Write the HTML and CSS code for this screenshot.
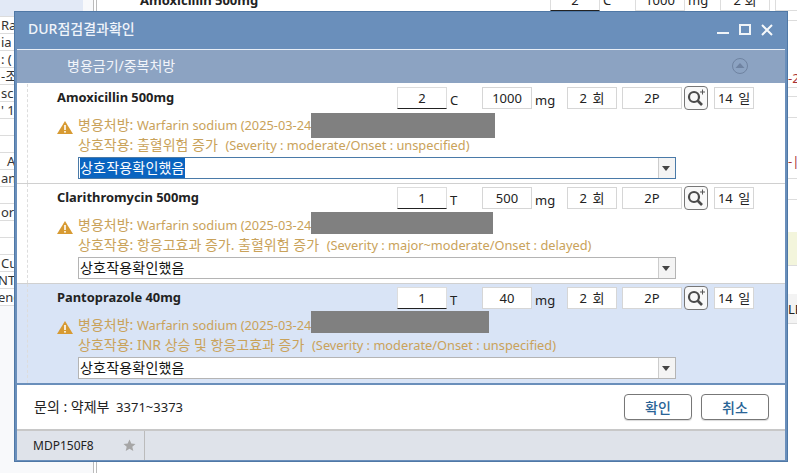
FILE: index.html
```html
<!DOCTYPE html>
<html lang="ko">
<head>
  <meta charset="UTF-8" />
  <title>DUR점검결과확인</title>
  <link rel="stylesheet" href="styles.css">
</head>
<body>

<!-- Window behind the dialog -->
<div class="desktop">
  <div class="back-left">
    <div class="back-cell tall"></div>
    <div class="back-cell">Ra</div>
    <div class="back-cell">ia</div>
    <div class="back-cell">: (</div>
    <div class="back-cell">-조</div>
    <div class="back-cell">sc</div>
    <div class="back-cell">' 1</div>
    <div class="back-cell"></div>
    <div class="back-cell"></div>
    <div class="back-cell right">A</div>
    <div class="back-cell">an</div>
    <div class="back-cell"></div>
    <div class="back-cell">or</div>
    <div class="back-cell"></div>
    <div class="back-cell"></div>
    <div class="back-cell">Cu</div>
    <div class="back-cell clip">NT</div>
    <div class="back-cell clip">eno</div>
  </div>
  <div class="back-top">
    <span class="back-name">Amoxicillin 500mg</span>
    <span class="back-field f-qty">2</span><span class="back-unit">C</span>
    <span class="back-field f-dose">1000</span><span class="back-unit">mg</span>
    <span class="back-field f-times">2 회</span>
    <span class="back-field f-packs"></span>
  </div>
  <div class="back-right">
    <div class="back-line h1"></div>
    <div class="back-line h2 red">-2</div>
    <div class="back-line h3"></div>
    <div class="back-line h4"></div>
    <div class="back-line h5 red">-|</div>
    <div class="back-line h6"></div>
    <div class="back-line h7 yellow"></div>
    <div class="back-line h8">LE</div>
  </div>
</div>

<div class="dialog">
  <div class="titlebar">
    <span class="title">DUR점검결과확인</span>
    <div class="win-btns">
      <svg width="14" height="14" viewBox="0 0 14 14"><rect x="1" y="9" width="12" height="2" fill="#fff" opacity="0.9"/></svg>
      <svg width="14" height="14" viewBox="0 0 14 14"><rect x="2" y="2" width="10" height="9" fill="none" stroke="#fff" stroke-width="2" opacity="0.9"/></svg>
      <svg width="14" height="14" viewBox="0 0 14 14"><path d="M2 2l10 10M12 2L2 12" stroke="#fff" stroke-width="2" opacity="0.95"/></svg>
    </div>
  </div>

  <div class="section">
    <span class="section-title">병용금기/중복처방</span>
    <svg class="collapse" width="18" height="18" viewBox="0 0 18 18"><circle cx="9" cy="9" r="7.500" fill="none" stroke="#6f83a1" stroke-width="1"/><path d="M4.500 11l4.500-5 4.500 5z" fill="#6f83a1"/></svg>
  </div>

  <div class="rows">
    <div class="row">
      <div class="row-top">
        <span class="drug">Amoxicillin 500mg</span>
        <span class="field qty">2</span><span class="unit">C</span>
        <span class="field dose">1000</span><span class="unit">mg</span>
        <span class="field times">2 회</span>
        <span class="field packs">2P</span>
        <button class="zoom-btn"><svg width="22" height="22" viewBox="0 0 22 22"><circle cx="9" cy="10" r="5" fill="none" stroke="#4a4a4a" stroke-width="2.200"/><path d="M12.500 13.500l4.500 4.500" stroke="#4a4a4a" stroke-width="2.600"/><path d="M17.500 2.500v5M15 5h5" stroke="#555" stroke-width="1"/></svg></button>
        <span class="field days">14 일</span>
      </div>
      <div class="warn">
        <svg class="warn-icon" width="16" height="13" viewBox="0 0 16 13"><path d="M8 0L16 13H0z" fill="#d79a32"/><rect x="7.200" y="4" width="1.600" height="5" fill="#fff"/><rect x="7.200" y="10" width="1.600" height="1.600" fill="#fff"/></svg>
        <span>병용처방: <span class="en">Warfarin sodium (2025-03-24</span></span><span class="redact w1"></span>
      </div>
      <div class="effect">상호작용: 출혈위험 증가 <small>(Severity : moderate/Onset : unspecified)</small></div>
      <div class="combo active">
        <span class="combo-text"><span class="selected">상호작용확인했음</span></span>
        <span class="combo-arrow"></span>
      </div>
    </div>

    <div class="row">
      <div class="row-top">
        <span class="drug">Clarithromycin 500mg</span>
        <span class="field qty">1</span><span class="unit">T</span>
        <span class="field dose">500</span><span class="unit">mg</span>
        <span class="field times">2 회</span>
        <span class="field packs">2P</span>
        <button class="zoom-btn"><svg width="22" height="22" viewBox="0 0 22 22"><circle cx="9" cy="10" r="5" fill="none" stroke="#4a4a4a" stroke-width="2.200"/><path d="M12.500 13.500l4.500 4.500" stroke="#4a4a4a" stroke-width="2.600"/><path d="M17.500 2.500v5M15 5h5" stroke="#555" stroke-width="1"/></svg></button>
        <span class="field days">14 일</span>
      </div>
      <div class="warn">
        <svg class="warn-icon" width="16" height="13" viewBox="0 0 16 13"><path d="M8 0L16 13H0z" fill="#d79a32"/><rect x="7.200" y="4" width="1.600" height="5" fill="#fff"/><rect x="7.200" y="10" width="1.600" height="1.600" fill="#fff"/></svg>
        <span>병용처방: <span class="en">Warfarin sodium (2025-03-24</span></span><span class="redact w2"></span>
      </div>
      <div class="effect">상호작용: 항응고효과 증가. 출혈위험 증가 <small>(Severity : major~moderate/Onset : delayed)</small></div>
      <div class="combo">
        <span class="combo-text">상호작용확인했음</span>
        <span class="combo-arrow"></span>
      </div>
    </div>

    <div class="row current">
      <div class="row-top">
        <span class="drug">Pantoprazole 40mg</span>
        <span class="field qty">1</span><span class="unit">T</span>
        <span class="field dose">40</span><span class="unit">mg</span>
        <span class="field times">2 회</span>
        <span class="field packs">2P</span>
        <button class="zoom-btn"><svg width="22" height="22" viewBox="0 0 22 22"><circle cx="9" cy="10" r="5" fill="none" stroke="#4a4a4a" stroke-width="2.200"/><path d="M12.500 13.500l4.500 4.500" stroke="#4a4a4a" stroke-width="2.600"/><path d="M17.500 2.500v5M15 5h5" stroke="#555" stroke-width="1"/></svg></button>
        <span class="field days">14 일</span>
      </div>
      <div class="warn">
        <svg class="warn-icon" width="16" height="13" viewBox="0 0 16 13"><path d="M8 0L16 13H0z" fill="#d79a32"/><rect x="7.200" y="4" width="1.600" height="5" fill="#fff"/><rect x="7.200" y="10" width="1.600" height="1.600" fill="#fff"/></svg>
        <span>병용처방: <span class="en">Warfarin sodium (2025-03-24</span></span><span class="redact w3"></span>
      </div>
      <div class="effect">상호작용: INR 상승 및 항응고효과 증가 <small>(Severity : moderate/Onset : unspecified)</small></div>
      <div class="combo">
        <span class="combo-text">상호작용확인했음</span>
        <span class="combo-arrow"></span>
      </div>
    </div>
  </div>

  <div class="footer">
    <span class="contact">문의 : 약제부 <small>3371~3373</small></span>
    <div class="footer-btns">
      <button class="action">확인</button>
      <button class="action">취소</button>
    </div>
  </div>

  <div class="tabbar">
    <div class="tab">
      <span>MDP150F8</span>
      <svg width="13" height="13" viewBox="0 0 13 13"><path d="M6.500 0.500l1.800 4 4.200 0.400-3.200 2.800 1 4.300-3.800-2.300-3.800 2.300 1-4.300L0.500 4.900l4.200-0.400z" fill="#a6a6a6"/></svg>
    </div>
  </div>
</div>

</body>
</html>
```

FILE: styles.css
```css
* {
  box-sizing: border-box;
}
html, body {
  margin: 0;
  height: 100%;
  overflow: hidden;
}
body {
  position: relative;
  width: 797px;
  height: 473px;
  background: #fff;
  font-family: "Noto Sans", "Noto Sans CJK KR", sans-serif;
  font-size: 13px;
  color: #222;
}

/* Window behind the dialog */
.desktop {
  position: absolute;
  inset: 0;
}
.back-left {
  position: absolute;
  left: 0;
  top: 0;
  width: 94px;
  height: 100%;
  background: #f8f9fb;
  border-right: 1px solid #bbb;
  font-size: 13px;
  color: #333;
}
.back-left::after {
  content: "";
  position: absolute;
  left: 96px;
  top: 0;
  bottom: 0;
  border-left: 1px solid #bbb;
}
.back-cell {
  height: 17px;
  padding-left: 1px;
  border-bottom: 1px solid #dcdcdc;
  background: #fff;
  line-height: 16px;
  white-space: nowrap;
}
.back-cell.tall {
  margin-right: 10px;
  background: #e2e9f6;
}
.back-cell.right {
  padding-left: 7px;
}
.back-cell.clip {
  text-indent: -3px;
}
.back-top {
  position: absolute;
  left: 140px;
  top: -11px;
  display: flex;
  align-items: center;
  width: 657px;
  height: 22px;
}
.back-name {
  width: 410px;
  font-weight: 700;
  flex: none;
}
.back-field {
  height: 22px;
  border: 1px solid #ddd;
  text-align: center;
  line-height: 20px;
  flex: none;
}
.f-qty {
  width: 50px;
  border-bottom-color: #222;
}
.f-dose, .f-times {
  width: 50px;
}
.f-packs {
  width: 60px;
  margin-left: 5px;
}
.back-unit {
  width: 35px;
  padding-left: 3px;
  flex: none;
}
.back-right {
  position: absolute;
  left: 788px;
  top: 0;
  width: 9px;
  font-size: 13px;
}
.back-line {
  border-bottom: 1px solid #dcdcdc;
  white-space: nowrap;
  overflow: hidden;
}
.back-line.red {
  color: #a33;
}
.h1 {
  height: 21px;
}
.h2 {
  height: 67px;
  padding-top: 48px;
}
.h3 {
  height: 9px;
}
.h4 {
  height: 21px;
}
.h5 {
  height: 61px;
  padding-top: 34px;
}
.h6 {
  height: 21px;
}
.h7 {
  height: 34px;
  margin-top: 32px;
  background: #f3f5dc;
}
.h8 {
  height: 30px;
  margin-top: 28px;
  background: #f3f3f3;
  line-height: 30px;
}

.dialog {
  position: absolute;
  left: 14px;
  top: 11px;
  width: 774px;
  height: 451px;
  display: flex;
  flex-direction: column;
  padding: 0 2px 1px;
  background: #6a8fbb;
  border: 1px solid #4f78a6;
}
.titlebar {
  display: flex;
  align-items: center;
  justify-content: space-between;
  height: 37px;
  padding: 0 11px 5px 11px;
  color: #f0f4fa;
  flex: none;
}
.title {
  font-size: 14px;
  font-weight: 500;
}
.win-btns {
  display: flex;
  gap: 8px;
  margin-top: 4px;
}
.section {
  display: flex;
  align-items: center;
  justify-content: space-between;
  height: 34px;
  padding: 0 36px 4px 50px;
  border-top: 1px solid #e8eef6;
  background: #8ca3c2;
  color: #f2f5fa;
  flex: none;
}
.section-title {
  font-size: 14px;
}
.collapse {
  margin-top: 2px;
}

.rows {
  background: #fff;
  flex: none;
}
.row {
  position: relative;
  height: 100px;
  padding: 3px 0 0 40px;
  border-top: 1px solid #d0d0d0;
}
.row:first-child {
  border-top-color: transparent;
}
.row::before {
  content: "";
  position: absolute;
  left: 10px;
  top: 0;
  bottom: 0;
  border-left: 1px dashed #ddd;
}
.row.current {
  background: #d9e4f6;
}
.row-top {
  display: flex;
  align-items: flex-start;
  height: 26px;
}
.drug {
  width: 340px;
  font-size: 12.900px;
  font-weight: 700;
  line-height: 21px;
  flex: none;
}
.field {
  height: 22px;
  border: 1px solid #d6d6d6;
  background: #fff;
  text-align: center;
  line-height: 20px;
  flex: none;
}
.qty {
  width: 50px;
  border-color: #ddd #ddd #222;
}
.dose {
  width: 50px;
}
.unit {
  width: 35px;
  padding-left: 3px;
  line-height: 27px;
  flex: none;
}
.times {
  width: 50px;
  word-spacing: 2px;
}
.packs {
  width: 60px;
  margin-left: 5px;
}
.zoom-btn {
  display: flex;
  align-items: center;
  justify-content: center;
  width: 24px;
  height: 24px;
  margin: -1px 0 0 2px;
  padding: 0;
  border: 1px solid #777;
  border-radius: 4px;
  background: #f8f8f8;
  flex: none;
}
.days {
  width: 40px;
  margin-left: 6px;
  word-spacing: 2px;
}
.warn {
  display: flex;
  align-items: center;
  height: 25px;
  padding-bottom: 3px;
  font-size: 14px;
  color: #c9a25a;
}
.warn .en {
  font-size: 12.800px;
}
.warn-icon {
  margin: 6px 5px 0 0;
  flex: none;
}
.redact {
  align-self: flex-start;
  background: #808080;
  flex: none;
}
.w1 {
  width: 184px;
  height: 25px;
}
.w2 {
  width: 182px;
  height: 22px;
  margin-top: -1px;
}
.w3 {
  width: 178px;
  height: 22px;
  margin-top: -2px;
}
.effect {
  height: 19px;
  padding-left: 21px;
  font-size: 14px;
  color: #c9a25a;
  line-height: 14px;
  white-space: nowrap;
}
.effect small {
  margin-left: 4px;
  font-size: 12.800px;
}
.combo {
  display: flex;
  width: 598px;
  height: 22px;
  margin-left: 21px;
  border: 1px solid #b4b4b4;
  background: #fff;
}
.combo.active {
  border-color: #4a7aa8;
}
.combo-text {
  padding-left: 1px;
  font-size: 14px;
  letter-spacing: 0.200px;
  line-height: 20px;
  color: #111;
  flex: 1;
}
.selected {
  display: inline-block;
  background: #0a64c0;
  color: #fff;
}
.combo-arrow {
  position: relative;
  width: 17px;
  border-left: 1px solid #ccc;
  background: #f4f4f4;
}
.combo-arrow::after {
  content: "";
  position: absolute;
  left: 3px;
  top: 8px;
  border: 4px solid transparent;
  border-top: 5px solid #444;
  border-bottom: 0;
}

.footer {
  display: flex;
  align-items: center;
  justify-content: space-between;
  height: 46px;
  margin-top: 2px;
  padding: 0 16px 2px 17px;
  background: #fff;
  border-bottom: 2px solid #c8c8c8;
  flex: none;
}
.contact {
  font-size: 14px;
}
.contact small {
  margin-left: 3px;
  font-size: 13px;
}
.footer-btns {
  display: flex;
  gap: 9px;
  margin-top: 2px;
}
.action {
  width: 68px;
  height: 26px;
  padding: 0;
  border: 1px solid #777;
  border-radius: 4px;
  background: #fff;
  color: #2a6496;
  font-family: inherit;
  font-size: 14px;
  font-weight: 500;
  box-shadow: 0 1px 1px rgba(0, 0, 0, 0.15);
}

.tabbar {
  flex: 1;
  display: flex;
  background: #dfe3ea;
}
.tab {
  display: flex;
  align-items: center;
  justify-content: space-between;
  width: 128px;
  padding: 0 8px 0 16px;
  border-right: 1px solid #bbb;
  font-size: 12px;
  color: #222;
}
```
